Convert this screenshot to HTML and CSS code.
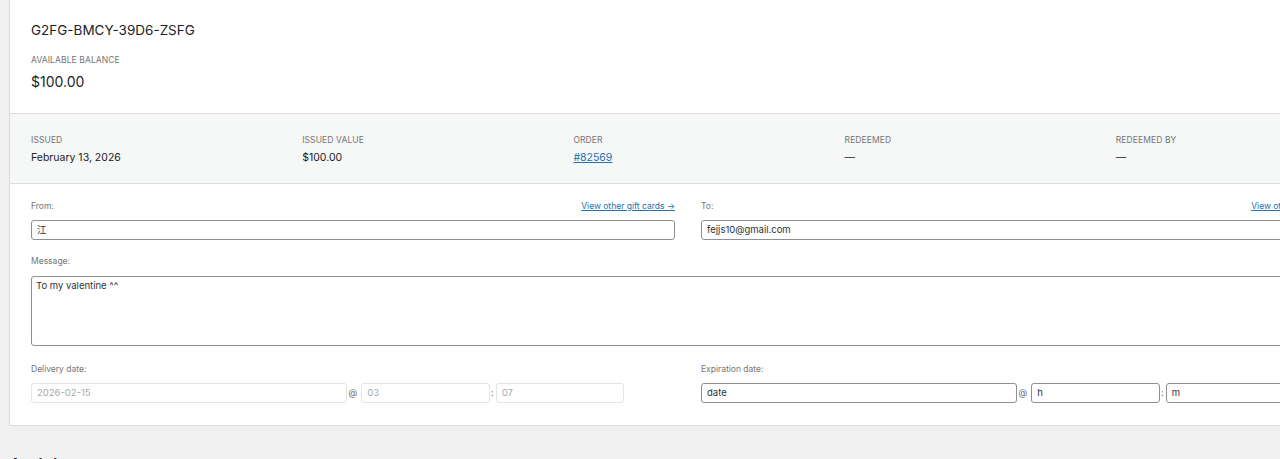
FILE: index.html
```html
<!DOCTYPE html>
<html>
<head>
<meta charset="utf-8">
<link rel="stylesheet" href="styles.css">
</head>
<body>
<div class="page">
  <div class="card">
    <div class="head">
      <div class="code">G2FG-BMCY-39D6-ZSFG</div>
      <div class="cap">Available balance</div>
      <div class="balance">$100.00</div>
    </div>
    <div class="info">
      <div class="cell"><div class="cap">Issued</div><div class="val">February 13, 2026</div></div>
      <div class="cell"><div class="cap">Issued value</div><div class="val">$100.00</div></div>
      <div class="cell"><div class="cap">Order</div><div class="val"><a class="order" href="#">#82569</a></div></div>
      <div class="cell"><div class="cap">Redeemed</div><div class="val">—</div></div>
      <div class="cell"><div class="cap">Redeemed by</div><div class="val">—</div></div>
    </div>
    <div class="form">
      <div class="field">
        <div class="lbl-row"><span class="lbl">From:</span><a class="link" href="#">View other gift cards →</a></div>
        <div class="input">江</div>
      </div>
      <div class="field">
        <div class="lbl-row"><span class="lbl">To:</span><a class="link" href="#">View other gift cards →</a></div>
        <div class="input">fejjs10@gmail.com</div>
      </div>
      <div class="field wide">
        <div class="lbl-row"><span class="lbl">Message:</span></div>
        <div class="input area">To my valentine ^^</div>
      </div>
      <div class="field dates">
        <div class="lbl-row"><span class="lbl">Delivery date:</span></div>
        <div class="dt-row">
          <div class="input disabled d">2026-02-15</div>
          <span class="sep at">@</span>
          <div class="input disabled t">03</div>
          <span class="sep colon">:</span>
          <div class="input disabled t">07</div>
        </div>
      </div>
      <div class="field dates">
        <div class="lbl-row"><span class="lbl">Expiration date:</span></div>
        <div class="dt-row">
          <div class="input d">date</div>
          <span class="sep at">@</span>
          <div class="input t">h</div>
          <span class="sep colon">:</span>
          <div class="input t">m</div>
        </div>
      </div>
    </div>
  </div>
  <h2 class="activity">Activity</h2>
</div>
</body>
</html>
```

FILE: styles.css
```css
html, body {
  margin: 0;
  padding: 0;
  background: #f0f0f1;
  overflow: hidden;
  font-family: Inter, "Noto Sans", "Noto Sans CJK SC", sans-serif;
  color: #1d2327;
}
.page {
  padding-left: 9px;
  width: 1400px;
}
.card {
  width: 1358px;
  box-sizing: border-box;
  background: #fff;
  border: 1px solid #dcdcde;
  border-top: none;
}
.head {
  padding: 20px 21px 21px;
  border-bottom: 1px solid #dcdcde;
}
.code {
  font-size: 13.5px;
  line-height: 20px;
  color: #1d2327;
}
.cap {
  font-size: 8.5px;
  line-height: 12px;
  text-transform: uppercase;
  color: #757575;
  letter-spacing: 0.1px;
}
.head .cap {
  margin-top: 14px;
}
.balance {
  margin-top: 6px;
  font-size: 14px;
  line-height: 20px;
  font-weight: 400;
  color: #1d2327;
}
.info {
  display: grid;
  grid-template-columns: repeat(5, 1fr);
  background: #f6f7f7;
  border-bottom: 1px solid #dcdcde;
  padding: 20px 0 17px;
}
.cell {
  padding-left: 21px;
}
.val {
  margin-top: 4px;
  font-size: 10.5px;
  line-height: 16px;
  color: #1d2327;
}
.order {
  color: #2271b1;
}
.form {
  display: grid;
  grid-template-columns: 644px 644px;
  column-gap: 26px;
  row-gap: 15px;
  padding: 16px 21px 22px;
}
.field.wide {
  grid-column: 1 / 3;
}
.field.wide .lbl-row {
  margin-bottom: 9px;
}
.field.dates {
  margin-top: 2px;
}
.lbl-row {
  display: flex;
  justify-content: space-between;
  align-items: center;
  height: 12px;
  margin-bottom: 8px;
}
.field.dates .lbl-row {
  margin-bottom: 8px;
}
.lbl {
  font-size: 8.5px;
  line-height: 12px;
  color: #757575;
}
.link {
  font-size: 8.5px;
  line-height: 12px;
  color: #2271b1;
  text-decoration: underline;
}
.input {
  box-sizing: border-box;
  height: 20px;
  border: 1px solid #8c8f94;
  border-radius: 3px;
  padding: 0 5px;
  font-size: 9.5px;
  line-height: 18px;
  color: #2c3338;
  background: #fff;
}
.input.area {
  height: 70px;
  line-height: 14px;
  padding-top: 2px;
  padding-left: 4px;
}
.input.disabled {
  border-color: #e4e4e7;
  color: #a7aaad;
}
.dt-row {
  display: flex;
  align-items: center;
}
.input.d {
  width: 49%;
}
.input.t {
  width: 20%;
}
.sep {
  font-size: 9px;
  color: #646970;
  line-height: 20px;
}
.sep.at {
  padding: 0 4px 0 2px;
}
.sep.colon {
  padding: 0 2px 0 1px;
}
.activity {
  margin: 28px 0 0;
  font-size: 18px;
  line-height: 24px;
  font-weight: 500;
  color: #1d2327;
}
```
